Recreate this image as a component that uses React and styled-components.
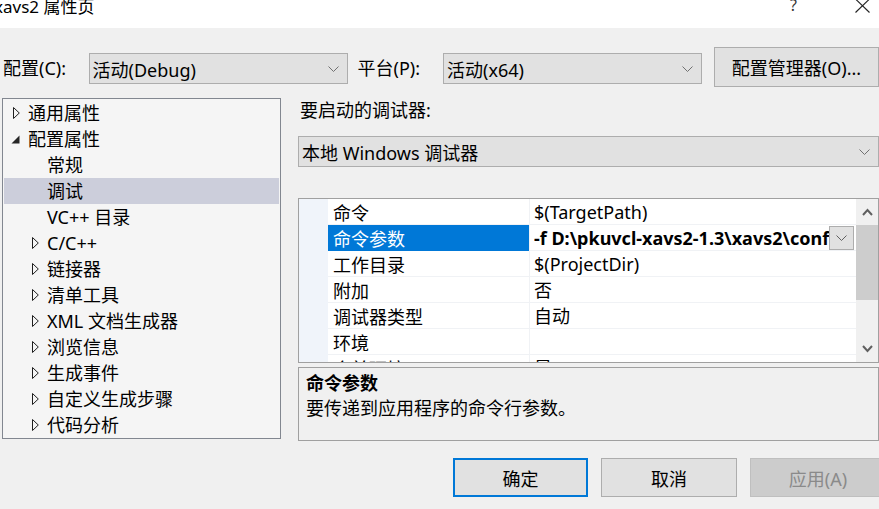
import React from 'react'
import styled, { createGlobalStyle } from 'styled-components'

const GlobalStyle = createGlobalStyle`
  html, body {
    margin: 0;
    padding: 0;
    background: #f0f0f0;
  }
  body {
    font-family: "Noto Sans", "Noto Sans CJK SC", sans-serif;
    font-size: 18px;
    color: #000;
  }
`

const Window = styled.div`
  width: 879px;
  height: 509px;
  overflow: hidden;
  background: #f0f0f0;
  display: flex;
  flex-direction: column;
`

const TitleBar = styled.div`
  height: 28px;
  flex: none;
  background: #fff;
  display: flex;
  align-items: flex-start;
  overflow: hidden;
`

const Title = styled.div`
  flex: 1;
  margin: -2px 0 0 -6px;
  font-size: 17px;
  line-height: 17px;
  white-space: nowrap;
`

const Help = styled.div`
  margin: -3px 58px 0 0;
  font-size: 16px;
  line-height: 16px;
  color: #333;
`

const Close = styled.div`
  margin: -1px 9px 0 0;
  line-height: 0;
`

const ConfigRow = styled.div`
  display: flex;
  align-items: flex-start;
  height: 40px;
  margin-top: 19px;
  flex: none;
`

const Label = styled.div`
  width: ${p => p.$w}px;
  margin-left: ${p => p.$ml || 0}px;
  margin-top: 6px;
  line-height: 31px;
  white-space: nowrap;
`

const Combo = styled.div`
  box-sizing: border-box;
  width: ${p => p.$w}px;
  height: 31px;
  margin-top: ${p => p.$mt || 0}px;
  border: 1px solid #adadad;
  background: #e1e1e1;
  display: flex;
  align-items: center;
  justify-content: space-between;
  padding: 0 8px 0 3px;
  white-space: nowrap;
  flex: none;
`

const Button = styled.div`
  box-sizing: border-box;
  width: ${p => p.$w}px;
  height: ${p => p.$h || 39}px;
  margin-left: ${p => p.$ml || 0}px;
  flex: none;
  display: flex;
  align-items: center;
  justify-content: center;
  background: ${p => (p.$disabled ? '#cccccc' : '#e1e1e1')};
  border: ${p => (p.$primary ? '2px solid #0078d7' : p.$disabled ? '1px solid #bfbfbf' : '1px solid #adadad')};
  color: ${p => (p.$disabled ? '#8a8a8a' : '#000')};
  white-space: nowrap;
`

const Body = styled.div`
  display: flex;
  margin-top: 11px;
  flex: none;
`

const Tree = styled.div`
  box-sizing: border-box;
  width: 279px;
  height: 341px;
  margin-left: 2px;
  padding: 1px;
  border: 1px solid #828790;
  background: #f5f5f5;
  overflow: hidden;
  flex: none;
`

const TreeRow = styled.div`
  height: 26px;
  line-height: 26px;
  display: flex;
  align-items: center;
  padding-left: ${p => 5 + p.$level * 19}px;
  background: ${p => (p.$selected ? '#cccedb' : 'transparent')};
  white-space: nowrap;
`

const ArrowBox = styled.div`
  width: 19px;
  box-sizing: border-box;
  padding-left: ${p => (p.$open ? 2 : 4)}px;
  display: flex;
  align-items: center;
  flex: none;
`

const Right = styled.div`
  width: 581px;
  margin-left: 17px;
  display: flex;
  flex-direction: column;
  flex: none;
`

const SectionLabel = styled.div`
  height: 24px;
  line-height: 24px;
  padding-left: 2px;
`

const Grid = styled.div`
  box-sizing: border-box;
  height: 165px;
  margin-top: 31px;
  border: 1px solid #a0a0a0;
  background: #fff;
  display: flex;
  overflow: hidden;
`

const GridRows = styled.div`
  flex: 1;
  overflow: hidden;
`

const GridRow = styled.div`
  display: grid;
  grid-template-columns: 29px 201px 1px 326px;
  height: 26px;
`

const Margin = styled.div`
  background: #f0f4fa;
`

const NameCell = styled.div`
  box-sizing: border-box;
  padding: 2px 0 0 5px;
  line-height: 24px;
  border-bottom: 1px solid ${p => (p.$selected ? '#0078d7' : '#f0f2f5')};
  background: ${p => (p.$selected ? '#0078d7' : '#fff')};
  color: ${p => (p.$selected ? '#fff' : '#000')};
  white-space: nowrap;
  overflow: hidden;
`

const Sep = styled.div`
  background: #f0f2f5;
`

const ValueCell = styled.div`
  box-sizing: border-box;
  display: flex;
  align-items: center;
  padding-left: 4px;
  border-bottom: 1px solid #f0f2f5;
  overflow: hidden;
`

const ValueText = styled.div`
  flex: 1;
  padding-top: 2px;
  line-height: 23px;
  font-weight: ${p => (p.$bold ? 700 : 400)};
  white-space: nowrap;
  overflow: hidden;
`

const DropButton = styled.div`
  box-sizing: border-box;
  width: 25px;
  height: 24px;
  margin: 0 2px 0 0;
  border: 1px solid #adadad;
  background: #e1e1e1;
  display: flex;
  align-items: center;
  justify-content: center;
  flex: none;
`

const ScrollBar = styled.div`
  width: 22px;
  background: #f0f0f0;
  display: flex;
  flex-direction: column;
  flex: none;
`

const ScrollArrow = styled.div`
  height: 26px;
  display: flex;
  align-items: center;
  justify-content: center;
  flex: none;
`

const Thumb = styled.div`
  height: 75px;
  background: #cdcdcd;
  flex: none;
`

const Track = styled.div`
  flex: 1;
`

const Description = styled.div`
  box-sizing: border-box;
  height: 74px;
  margin-top: 4px;
  padding: 3px 7px 0;
  border: 1px solid #a0a0a0;
  background: #f0f0f0;
  line-height: 25px;
`

const DescTitle = styled.div`
  font-weight: 700;
`

const Footer = styled.div`
  display: flex;
  margin-top: 17px;
  padding-left: 453px;
  gap: 13px;
  flex: none;
`

const Chevron = ({ color = '#707070' }) => (
  <svg width="11" height="6" viewBox="0 0 11 6">
    <polyline points="0.5,0.5 5.5,5.5 10.5,0.5" fill="none" stroke={color} strokeWidth="1" />
  </svg>
)

const ScrollChevron = ({ up }) => (
  <svg width="11" height="8" viewBox="0 0 11 8">
    <polyline
      points={up ? '1,7 5.5,2 10,7' : '1,1 5.5,6 10,1'}
      fill="none"
      stroke="#606060"
      strokeWidth="2"
    />
  </svg>
)

const TreeArrow = ({ open }) =>
  open ? (
    <svg width="9" height="9" viewBox="0 0 9 9">
      <polygon points="8.5,0.5 8.5,8.5 0.5,8.5" fill="#262626" />
    </svg>
  ) : (
    <svg width="7" height="12" viewBox="0 0 7 12">
      <polygon points="0.5,0.5 6.3,6 0.5,11.5" fill="none" stroke="#1e1e1e" strokeWidth="1" />
    </svg>
  )

const treeItems = [
  { label: '通用属性', level: 0, arrow: 'closed' },
  { label: '配置属性', level: 0, arrow: 'open' },
  { label: '常规', level: 1 },
  { label: '调试', level: 1, selected: true },
  { label: 'VC++ 目录', level: 1 },
  { label: 'C/C++', level: 1, arrow: 'closed' },
  { label: '链接器', level: 1, arrow: 'closed' },
  { label: '清单工具', level: 1, arrow: 'closed' },
  { label: 'XML 文档生成器', level: 1, arrow: 'closed' },
  { label: '浏览信息', level: 1, arrow: 'closed' },
  { label: '生成事件', level: 1, arrow: 'closed' },
  { label: '自定义生成步骤', level: 1, arrow: 'closed' },
  { label: '代码分析', level: 1, arrow: 'closed' },
]

const properties = [
  { name: '命令', value: '$(TargetPath)' },
  { name: '命令参数', value: '-f D:\\pkuvcl-xavs2-1.3\\xavs2\\config\\encoder.cfg', selected: true },
  { name: '工作目录', value: '$(ProjectDir)' },
  { name: '附加', value: '否' },
  { name: '调试器类型', value: '自动' },
  { name: '环境', value: '' },
  { name: '合并环境', value: '是' },
]

export default function App() {
  return (
    <Window>
      <GlobalStyle />
      <TitleBar>
        <Title>xavs2 属性页</Title>
        <Help>?</Help>
        <Close>
          <svg width="15" height="14" viewBox="0 0 15 14">
            <line x1="0.5" y1="0" x2="14.5" y2="13.5" stroke="#222" strokeWidth="1.1" />
            <line x1="14.5" y1="0" x2="0.5" y2="13.5" stroke="#222" strokeWidth="1.1" />
          </svg>
        </Close>
      </TitleBar>

      <ConfigRow>
        <Label $w={86} $ml={3}>配置(C):</Label>
        <Combo $w={259} $mt={6}>
          <span>活动(Debug)</span>
          <Chevron />
        </Combo>
        <Label $w={86} $ml={10}>平台(P):</Label>
        <Combo $w={259} $mt={6}>
          <span>活动(x64)</span>
          <Chevron />
        </Combo>
        <Button $w={165} $h={40} $ml={12}>配置管理器(O)...</Button>
      </ConfigRow>

      <Body>
        <Tree>
          {treeItems.map(item => (
            <TreeRow key={item.label} $level={item.level} $selected={item.selected}>
              <ArrowBox $open={item.arrow === 'open'}>
                {item.arrow && <TreeArrow open={item.arrow === 'open'} />}
              </ArrowBox>
              {item.label}
            </TreeRow>
          ))}
        </Tree>

        <Right>
          <SectionLabel>要启动的调试器:</SectionLabel>
          <Combo $w={581} $mt={14}>
            <span>本地 Windows 调试器</span>
            <Chevron />
          </Combo>

          <Grid>
            <GridRows>
              {properties.map(p => (
                <GridRow key={p.name}>
                  <Margin />
                  <NameCell $selected={p.selected}>{p.name}</NameCell>
                  <Sep />
                  <ValueCell>
                    <ValueText $bold={p.selected}>{p.value}</ValueText>
                    {p.selected && (
                      <DropButton>
                        <Chevron color="#606060" />
                      </DropButton>
                    )}
                  </ValueCell>
                </GridRow>
              ))}
            </GridRows>
            <ScrollBar>
              <ScrollArrow>
                <ScrollChevron up />
              </ScrollArrow>
              <Thumb />
              <Track />
              <ScrollArrow>
                <ScrollChevron />
              </ScrollArrow>
            </ScrollBar>
          </Grid>

          <Description>
            <DescTitle>命令参数</DescTitle>
            <div>要传递到应用程序的命令行参数。</div>
          </Description>
        </Right>
      </Body>

      <Footer>
        <Button $w={135} $primary>确定</Button>
        <Button $w={136}>取消</Button>
        <Button $w={136} $disabled>应用(A)</Button>
      </Footer>
    </Window>
  )
}
